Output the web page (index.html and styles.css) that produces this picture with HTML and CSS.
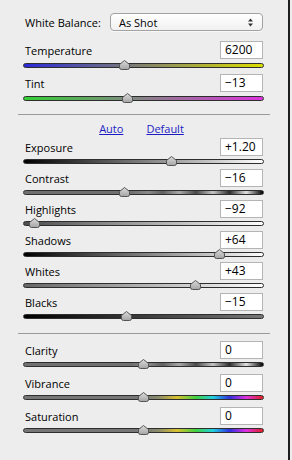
FILE: index.html
```html
<!DOCTYPE html>
<html lang="en">
<head>
    <meta charset="UTF-8">
    <meta name="viewport" content="width=device-width, initial-scale=1.0">
    <title>Basic</title>
    <link rel="stylesheet" href="styles.css">
</head>
<body>
    <div class="panel">
        <div class="wb-row">
            <span class="wb-label">White Balance:</span>
            <div class="select">
                <span>As Shot</span>
                <svg class="select-arrows" width="7" height="9" viewBox="0 0 7 9">
                    <path d="M3.5 0.5 L6 3.5 H1 Z" fill="#333"/>
                    <path d="M3.5 8.5 L6 5.5 H1 Z" fill="#333"/>
                </svg>
            </div>
        </div>

        <div class="group group-wb">
            <div class="ctl">
                <div class="ctl-head"><span class="ctl-label">Temperature</span><span class="ctl-value">6200</span></div>
                <div class="track track-temp"><span class="thumb" style="left: 42%"></span></div>
            </div>
            <div class="ctl">
                <div class="ctl-head"><span class="ctl-label">Tint</span><span class="ctl-value">&minus;13</span></div>
                <div class="track track-tint"><span class="thumb" style="left: 43.2%"></span></div>
            </div>
        </div>

        <div class="divider divider-top"></div>

        <div class="links">
            <a href="#">Auto</a>
            <a href="#">Default</a>
        </div>

        <div class="group group-tone">
            <div class="ctl">
                <div class="ctl-head"><span class="ctl-label">Exposure</span><span class="ctl-value">+1.20</span></div>
                <div class="track track-exposure"><span class="thumb" style="left: 61.7%"></span></div>
            </div>
            <div class="ctl">
                <div class="ctl-head"><span class="ctl-label">Contrast</span><span class="ctl-value">&minus;16</span></div>
                <div class="track track-contrast"><span class="thumb" style="left: 42%"></span></div>
            </div>
            <div class="ctl">
                <div class="ctl-head"><span class="ctl-label">Highlights</span><span class="ctl-value">&minus;92</span></div>
                <div class="track track-highlights"><span class="thumb" style="left: 4.5%"></span></div>
            </div>
            <div class="ctl">
                <div class="ctl-head"><span class="ctl-label">Shadows</span><span class="ctl-value">+64</span></div>
                <div class="track track-shadows"><span class="thumb" style="left: 81.9%"></span></div>
            </div>
            <div class="ctl">
                <div class="ctl-head"><span class="ctl-label">Whites</span><span class="ctl-value">+43</span></div>
                <div class="track track-whites"><span class="thumb" style="left: 71.6%"></span></div>
            </div>
            <div class="ctl">
                <div class="ctl-head"><span class="ctl-label">Blacks</span><span class="ctl-value">&minus;15</span></div>
                <div class="track track-blacks"><span class="thumb" style="left: 42.8%"></span></div>
            </div>
        </div>

        <div class="divider divider-bottom"></div>

        <div class="group group-presence">
            <div class="ctl">
                <div class="ctl-head"><span class="ctl-label">Clarity</span><span class="ctl-value">0</span></div>
                <div class="track track-contrast"><span class="thumb" style="left: 50%"></span></div>
            </div>
            <div class="ctl">
                <div class="ctl-head"><span class="ctl-label">Vibrance</span><span class="ctl-value">0</span></div>
                <div class="track track-color"><span class="thumb" style="left: 50%"></span></div>
            </div>
            <div class="ctl">
                <div class="ctl-head"><span class="ctl-label">Saturation</span><span class="ctl-value">0</span></div>
                <div class="track track-color"><span class="thumb" style="left: 50%"></span></div>
            </div>
        </div>
    </div>
</body>
</html>
```

FILE: styles.css
```css
html, body {
    margin: 0;
    padding: 0;
}
body {
    font-family: "Open Sans", Arial, sans-serif;
    font-size: 11px;
    color: #000;
    background: #ededed;
}
.panel {
    width: 290px;
    height: 460px;
    box-sizing: border-box;
    border-right: 2px solid #1e1e1e;
    padding: 13px 24px 0 23px;
}

/* white balance */
.wb-row {
    display: flex;
    align-items: center;
    height: 18px;
}
.wb-label {
    padding-left: 2px;
    width: 85px;
}
.select {
    box-sizing: border-box;
    width: 153px;
    height: 18px;
    margin-left: 0;
    display: flex;
    align-items: center;
    justify-content: space-between;
    padding: 0 8px 0 8px;
    border: 1px solid #a2a2a2;
    border-radius: 4px;
    background: linear-gradient(#ffffff, #f1f1f1);
    box-shadow: 0 1px 0 rgba(255, 255, 255, 0.6);
}

/* sliders */
.ctl-head {
    display: flex;
    align-items: center;
    justify-content: space-between;
    height: 18px;
}
.ctl-label {
    padding-left: 2px;
}
.ctl-value {
    box-sizing: border-box;
    width: 43px;
    height: 18px;
    margin-right: 1px;
    padding: 0 4px;
    line-height: 16px;
    font-size: 12px;
    background: #fff;
    border: 1px solid #b4b4b4;
}
.track {
    position: relative;
    height: 3px;
    border: 1px solid #2e2e2e;
    border-radius: 3px;
}
.thumb {
    position: absolute;
    top: -4px;
    width: 11px;
    height: 10px;
    margin-left: -5.5px;
    background: url("data:image/svg+xml,%3Csvg xmlns='http://www.w3.org/2000/svg' width='11' height='10'%3E%3Cdefs%3E%3ClinearGradient id='g' x1='0' y1='0' x2='0' y2='1'%3E%3Cstop offset='0' stop-color='%23dcdcdc'/%3E%3Cstop offset='1' stop-color='%23a4a4a4'/%3E%3C/linearGradient%3E%3C/defs%3E%3Cpath d='M5.5 0.5 L10.5 4.5 V7.5 Q10.5 9.5 8.5 9.5 H2.5 Q0.5 9.5 0.5 7.5 V4.5 Z' fill='url(%23g)' stroke='%23555'/%3E%3C/svg%3E") no-repeat;
}

.group-wb .ctl {
    margin-top: 10px;
}
.group-wb .ctl + .ctl {
    margin-top: 6px;
}
.group-wb .track {
    margin-top: 4px;
}
.group-tone .ctl + .ctl {
    margin-top: 5px;
}
.group-tone .track {
    margin-top: 3px;
}
.group-presence .ctl {
    margin-top: 7px;
}
.group-presence .track {
    margin-top: 3px;
}

.track-temp { background: linear-gradient(to right, #2a2ad8, #dddd00); }
.track-tint { background: linear-gradient(to right, #33d033, #dd33dd); }
.track-exposure { background: linear-gradient(to right, #000, #fff); }
.track-highlights { background: linear-gradient(to right, #4c4c4c, #fff); }
.track-shadows { background: linear-gradient(to right, #000, #fff); }
.track-whites { background: linear-gradient(to right, #666, #fff); }
.track-blacks { background: linear-gradient(to right, #000, #777); }
.track-contrast {
    background: linear-gradient(to right,
        #707070 0%, #707070 45%, #8a8a8a 52%, #606060 58%, #a8a8a8 65%,
        #4a4a4a 72%, #c4c4c4 79%, #2e2e2e 86%, #e2e2e2 93%, #000 100%);
}
.track-color {
    background: linear-gradient(to right,
        #777 0%, #777 50%, #8a8a6a 56%, #d8c030 64%, #40d040 72%,
        #20d0e0 79%, #3030e0 86%, #e030e0 93%, #e02020 100%);
}

/* dividers and links */
.divider {
    height: 1px;
    background: #9a9a9a;
    margin-left: -5px;
    margin-right: -6px;
}
.divider-top {
    margin-top: 13px;
}
.divider-bottom {
    margin-top: 14px;
}
.links {
    display: flex;
    justify-content: center;
    gap: 23px;
    height: 18px;
    line-height: 18px;
    margin-top: 5px;
    padding-right: 4px;
}
.links a {
    color: #1c1cc4;
    text-decoration: underline;
}
```
